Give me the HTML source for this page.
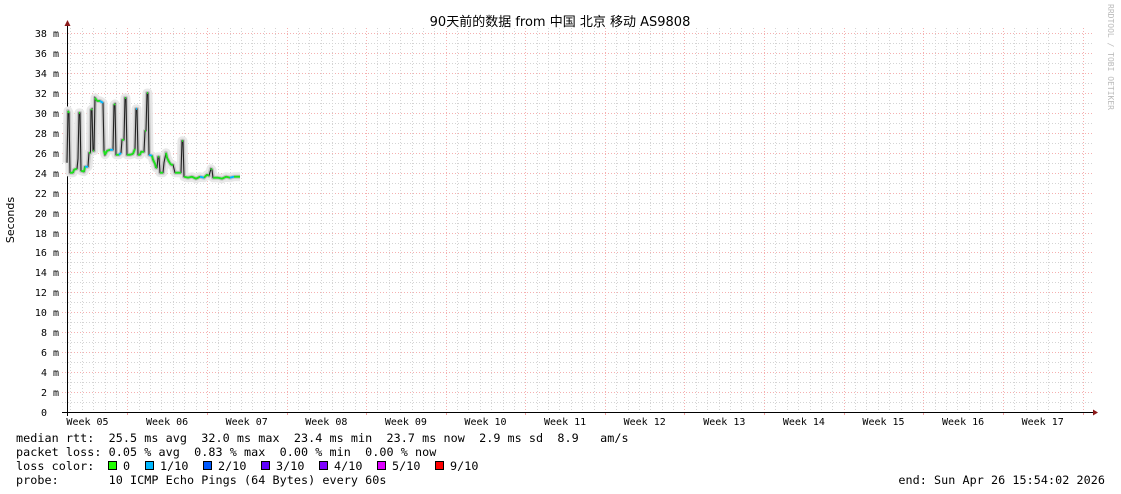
<!DOCTYPE html>
<html><head><meta charset="utf-8"><style>
html,body{margin:0;padding:0;background:#fff;}
svg{display:block;}
text{font-family:"DejaVu Sans Mono","Liberation Mono",monospace;fill:#000;}
</style></head><body>
<svg id="s" width="1121" height="494" viewBox="0 0 1121 494" xmlns="http://www.w3.org/2000/svg">
<g id="grid"></g>
<g id="data"></g>
<text x="560" y="26" font-size="13" text-anchor="middle" style="font-family:'DejaVu Sans','Noto Sans CJK SC',sans-serif">90天前的数据 from  中国 北京 移动 AS9808</text>
<text transform="translate(14,220) rotate(-90)" font-size="11" text-anchor="middle" style="font-family:'DejaVu Sans',sans-serif">Seconds</text>
<text transform="translate(1108,4) rotate(90)" font-size="8" fill="#bbb" style="fill:#bbb">RRDTOOL / TOBI OETIKER</text>
<g font-size="11.75" style="letter-spacing:0.05px">
<text x="16" y="442" xml:space="preserve">median rtt:  25.5 ms avg  32.0 ms max  23.4 ms min  23.7 ms now  2.9 ms sd  8.9   am/s</text>
<text x="16" y="456" xml:space="preserve">packet loss: 0.05 % avg  0.83 % max  0.00 % min  0.00 % now</text>
<text x="16" y="470" xml:space="preserve">loss color:  </text>
<text x="16" y="484" xml:space="preserve">probe:       10 ICMP Echo Pings (64 Bytes) every 60s</text>
<text x="1105" y="484" text-anchor="end" xml:space="preserve">end: Sun Apr 26 15:54:02 2026</text>
<g id="leg"></g>
</g>
</svg>
<script>
var NS="http://www.w3.org/2000/svg";
function el(p,t,a,txt){var e=document.createElementNS(NS,t);for(var k in a)e.setAttribute(k,a[k]);if(txt!==undefined)e.textContent=txt;p.appendChild(e);return e;}
var g=document.getElementById('grid');
function Y(v){return 412-v*9.97;}
for(var m=1;m<=38;m++){var y=Math.round(Y(m))+.5;
 el(g,'line',{x1:62,x2:1093,y1:y,y2:y,stroke:m%2?'#d4d4d4':'#f5b0b0','stroke-dasharray':'1,2','stroke-width':1});
 if(m%2==0){el(g,'text',{x:59,y:y+3.5,'font-size':10,'text-anchor':'end'},m+' m');}
}
el(g,'text',{x:47,y:416,'font-size':10,'text-anchor':'end'},'0');
var w0=127.3,ww=79.6;
for(var d=-7;d<=7*12+2;d++){var x=w0+d*ww/7;if(x<68||x>1093)continue;x=Math.round(x)+.5;
 var major=(d%7==0);
 el(g,'line',{x1:x,x2:x,y1:28,y2:412,stroke:major?'#f5b0b0':'#d4d4d4','stroke-dasharray':'1,2'});
 if(major)el(g,'line',{x1:x,x2:x,y1:412,y2:415,stroke:'#f2a0a0'});
}
for(var i=0;i<13;i++){var cx=w0-ww/2+i*ww;el(g,'text',{x:Math.max(cx,87),y:425,'font-size':10,'text-anchor':'middle'},'Week '+(i<5?'0'+(i+5):(i+5)));}
el(g,'line',{x1:62,x2:1094,y1:412.5,y2:412.5,stroke:'#000'});
el(g,'line',{x1:67.5,x2:67.5,y1:24,y2:416,stroke:'#000'});
el(g,'path',{d:'M1093 409.5 L1098 412.5 L1093 415.5Z',fill:'#8b1a1a'});
el(g,'path',{d:'M64.5 26 L67.5 20 L70.5 26Z',fill:'#8b1a1a'});
var P=[[67,25],[68,30.2],[69,30],[70,24],[73,24],[74,24.3],[77,24.4],[78,25.4],[79,30],[80,30],[81,24.2],[84,24.1],[85,24.6],[88,24.6],[89,26],[90.5,26],[91,30.3],[92,30.4],[93,26.2],[94,26.2],[95,31.5],[97,31.2],[100,31.2],[103,31],[104,26.2],[105,25.8],[107,26.2],[110,26.3],[113,26.3],[114,30.8],[115,30.9],[116,25.8],[119,25.8],[121,26],[122,27.3],[124,27.3],[125,31.5],[126,31.5],[127,25.8],[130,25.8],[133,25.9],[135,26.4],[136,30.4],[137,30.4],[138,25.8],[140,25.8],[141,26.1],[144,26.1],[145,28.2],[146,28.2],[147,32],[148,32],[149,25.8],[152,25.7],[153,25.3],[155,24.9],[156,24.5],[157,24.5],[158,25.6],[159,25.6],[160,24],[163,24],[164,25],[166,26],[167,25.5],[169,25.1],[171,24.8],[173,24.8],[175,24],[178,24],[181,24],[182,27.2],[183,27.2],[184,23.6],[188,23.5],[192,23.6],[196,23.4],[200,23.6],[204,23.5],[207,23.8],[209,23.7],[211,24.4],[212,24.3],[213,23.5],[218,23.5],[222,23.4],[226,23.6],[230,23.5],[234,23.6],[240,23.6]];
var dg=document.getElementById('data');
var pts=P.map(function(p){return p[0]+','+Y(p[1]).toFixed(1);}).join(' ');
el(dg,'polyline',{points:pts,fill:'none',stroke:'#e8e8e8','stroke-width':9,'stroke-linejoin':'round'});
el(dg,'polyline',{points:pts,fill:'none',stroke:'#c4c4c4','stroke-width':4,'stroke-linejoin':'round'});
el(dg,'polyline',{points:pts,fill:'none',stroke:'#222','stroke-width':1.1});
for(var i=0;i<P.length-1;i++){var a=P[i],b=P[i+1];if(Math.abs(a[1]-b[1])<0.6){
 el(dg,'line',{x1:a[0],x2:b[0],y1:Y(a[1]),y2:Y(b[1]),stroke:(i%5==2?'#00b8ff':'#1ee01e'),'stroke-width':2});}}
var lg=document.getElementById('leg');
var L=[[108,'#20ff00','0'],[145,'#00b8ff','1/10'],[203,'#0059ff','2/10'],[261,'#5e00ff','3/10'],[319,'#7e00ff','4/10'],[377,'#dd00ff','5/10'],[435,'#ff0000','9/10']];
L.forEach(function(l){el(lg,'rect',{x:l[0]+.5,y:461.5,width:8,height:8,fill:l[1],stroke:'#000'});el(lg,'text',{x:l[0]+15,y:470},l[2]);});
</script>
</body></html>
